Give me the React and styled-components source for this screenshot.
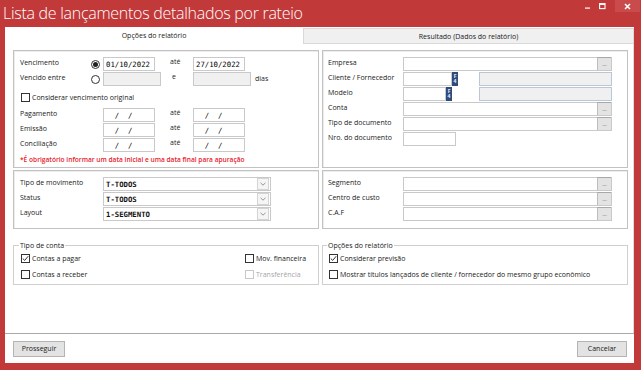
import styled, { createGlobalStyle } from "styled-components";

const GlobalStyle = createGlobalStyle`
  html, body {
    margin: 0;
    padding: 0;
    background: #c2393a;
  }
  * {
    box-sizing: border-box;
  }
`;

const UI = `"Open Sans", "Noto Sans", sans-serif`;
const MONO = `"DejaVu Sans Mono", "Liberation Mono", monospace`;

function Radio({ checked }) {
  return (
    <RadioBox>
      <RadioDot $checked={checked} />
    </RadioBox>
  );
}

function Check({ checked, disabled, children }) {
  return (
    <CheckRow $disabled={disabled}>
      <CheckBox $disabled={disabled}>
        {checked && (
          <svg width="7" height="7" viewBox="0 0 7 7">
            <path d="M0.8 3.6 L2.7 5.4 L6.2 1.2" fill="none" stroke="#333" strokeWidth="1" />
          </svg>
        )}
      </CheckBox>
      <span>{children}</span>
    </CheckRow>
  );
}

function LookupField({ w = 209 }) {
  return (
    <Field $w={w}>
      <FieldText />
      <EllipsisBtn>...</EllipsisBtn>
    </Field>
  );
}

function Select({ value }) {
  return (
    <SelectBox>
      <SelectText>{value}</SelectText>
      <SelectArrow>
        <svg width="6" height="4" viewBox="0 0 6 4">
          <path d="M0.5 0.8 L3 3.2 L5.5 0.8" fill="none" stroke="#8a8a8a" strokeWidth="0.9" />
        </svg>
      </SelectArrow>
    </SelectBox>
  );
}

function DateRow({ label }) {
  return (
    <Row>
      <Label $w={83}>{label}</Label>
      <Field $w={52}>
        <DateText>{"  /  /"}</DateText>
      </Field>
      <Joiner $w={38} $pl={15}>até</Joiner>
      <Field $w={52}>
        <DateText>{"  /  /"}</DateText>
      </Field>
    </Row>
  );
}

export default function App() {
  return (
    <>
      <GlobalStyle />
      <Window>
        <TitleBar>
          <Title>Lista de lançamentos detalhados por rateio</Title>
          <Controls>
            <CtrlBtn>
              <svg width="6" height="6" viewBox="0 0 6 6">
                <rect x="0" y="4.5" width="5" height="1.2" fill="#fff" />
              </svg>
            </CtrlBtn>
            <CtrlBtn>
              <svg width="7" height="7" viewBox="0 0 7 7">
                <rect x="0.6" y="0.6" width="5.4" height="5" fill="none" stroke="#fff" strokeWidth="1.1" />
                <rect x="0.6" y="0.6" width="5.4" height="1.4" fill="#fff" />
              </svg>
            </CtrlBtn>
            <CtrlBtn $close>
              <svg width="7" height="7" viewBox="0 0 7 7">
                <path d="M1 1 L6 6 M6 1 L1 6" stroke="#fff" strokeWidth="1.5" />
              </svg>
            </CtrlBtn>
          </Controls>
        </TitleBar>

        <Frame>
          <TabStrip>
            <Tab $active $w={298}>Opções do relatório</Tab>
            <Tab $w={331}>Resultado (Dados do relatório)</Tab>
          </TabStrip>

          <TabPage>
            <Columns>
              <Panel $h={118}>
                <Row>
                  <Label $w={70}>Vencimento</Label>
                  <Radio checked />
                  <Field $w={52}>
                    <DateText>01/10/2022</DateText>
                  </Field>
                  <Joiner $w={38} $pl={15}>até</Joiner>
                  <Field $w={52}>
                    <DateText>27/10/2022</DateText>
                  </Field>
                </Row>
                <Row>
                  <Label $w={70}>Vencido entre</Label>
                  <Radio />
                  <Field $w={58} $disabled />
                  <Joiner $w={32} $pl={11}>e</Joiner>
                  <Field $w={58} $disabled />
                  <Joiner $w={30} $pl={4} $mid>dias</Joiner>
                </Row>
                <CheckLine>
                  <Check>Considerar vencimento original</Check>
                </CheckLine>
                <DateRow label="Pagamento" />
                <DateRow label="Emissão" />
                <DateRow label="Conciliação" />
                <Note>*É obrigatório informar um data inicial e uma data final para apuração</Note>
              </Panel>

              <Panel $h={118} $right>
                <Row>
                  <Label $w={75}>Empresa</Label>
                  <LookupField />
                </Row>
                <Row>
                  <Label $w={75}>Cliente / Fornecedor</Label>
                  <Field $w={49} />
                  <F4Badge>
                    <span>F</span>
                    <span>4</span>
                  </F4Badge>
                  <Field $w={133} $disabled $blue $ml={21} />
                </Row>
                <Row>
                  <Label $w={75}>Modelo</Label>
                  <Field $w={43} />
                  <F4Badge>
                    <span>F</span>
                    <span>4</span>
                  </F4Badge>
                  <Field $w={133} $disabled $blue $ml={27} />
                </Row>
                <Row>
                  <Label $w={75}>Conta</Label>
                  <LookupField />
                </Row>
                <Row>
                  <Label $w={75}>Tipo de documento</Label>
                  <LookupField />
                </Row>
                <Row>
                  <Label $w={75}>Nro. do documento</Label>
                  <Field $w={53} />
                </Row>
              </Panel>

              <Panel $h={59}>
                <Row>
                  <Label $w={83}>Tipo de movimento</Label>
                  <Select value="T-TODOS" />
                </Row>
                <Row>
                  <Label $w={83}>Status</Label>
                  <Select value="T-TODOS" />
                </Row>
                <Row>
                  <Label $w={83}>Layout</Label>
                  <Select value="1-SEGMENTO" />
                </Row>
              </Panel>

              <Panel $h={59} $right>
                <Row>
                  <Label $w={75}>Segmento</Label>
                  <LookupField />
                </Row>
                <Row>
                  <Label $w={75}>Centro de custo</Label>
                  <LookupField />
                </Row>
                <Row>
                  <Label $w={75}>C.A.F</Label>
                  <LookupField />
                </Row>
              </Panel>

              <GroupBox>
                <Legend>Tipo de conta</Legend>
                <GroupGrid>
                  <Check checked>Contas a pagar</Check>
                  <Check>Mov. financeira</Check>
                  <Check>Contas a receber</Check>
                  <Check disabled>Transferência</Check>
                </GroupGrid>
              </GroupBox>

              <GroupBox $right>
                <Legend>Opções do relatório</Legend>
                <GroupList>
                  <Check checked>Considerar previsão</Check>
                  <Check>Mostrar títulos lançados de cliente / fornecedor do mesmo grupo econômico</Check>
                </GroupList>
              </GroupBox>
            </Columns>
          </TabPage>

          <Footer>
            <Button $w={52}>Prosseguir</Button>
            <Button $w={50}>Cancelar</Button>
          </Footer>
        </Frame>
      </Window>
    </>
  );
}

const Window = styled.div`
  width: 641px;
  height: 370px;
  background: #c2393a;
  display: flex;
  flex-direction: column;
  font-family: ${UI};
  color: #1a1a1a;
  overflow: hidden;
`;

const TitleBar = styled.div`
  height: 27px;
  display: flex;
  align-items: flex-start;
  justify-content: space-between;
`;

const Title = styled.div`
  padding: 2px 0 0 3px;
  font: 300 16px ${UI};
  letter-spacing: -0.28px;
  color: #ffffff;
  line-height: 22px;
`;

const Controls = styled.div`
  display: flex;
  align-items: flex-start;
  padding-right: 1px;
`;

const CtrlBtn = styled.div`
  width: ${(p) => (p.$close ? 25 : 15)}px;
  height: 12px;
  display: flex;
  align-items: center;
  justify-content: center;
  background: ${(p) => (p.$close ? "#c94b4b" : "transparent")};
  margin-left: ${(p) => (p.$close ? 5 : 0)}px;
`;

const Frame = styled.div`
  flex: 1;
  margin: 0 7px 7px 5px;
  background: #ffffff;
  display: flex;
  flex-direction: column;
`;

const TabStrip = styled.div`
  height: 17px;
  display: flex;
  align-items: flex-end;
`;

const Tab = styled.div`
  width: ${(p) => p.$w}px;
  height: ${(p) => (p.$active ? 17 : 16)}px;
  display: flex;
  align-items: center;
  justify-content: center;
  font-size: 7px;
  background: ${(p) => (p.$active ? "#ffffff" : "#f0f0f0")};
  border: ${(p) => (p.$active ? "none" : "1px solid #d9d9d9")};
`;

const TabPage = styled.div`
  height: 289px;
  padding: 6px 6px 0 8px;
  border-right: 1px solid #dcdcdc;
`;

const Columns = styled.div`
  display: grid;
  grid-template-columns: 306px 306px;
  column-gap: 3px;
  row-gap: 2px;
  align-items: start;
`;

const Panel = styled.div`
  height: ${(p) => p.$h}px;
  border: 1px solid #c2c2c2;
  box-shadow: inset 1px 1px 0 #ececec;
  padding: 6px 0 0 ${(p) => (p.$right ? 5 : 6)}px;
  display: flex;
  flex-direction: column;
  gap: 1px;
`;

const Row = styled.div`
  display: flex;
  align-items: flex-start;
  height: 14px;
`;

const Label = styled.div`
  width: ${(p) => p.$w}px;
  flex-shrink: 0;
  font-size: 7px;
  line-height: 11px;
  white-space: nowrap;
`;

const RadioBox = styled.div`
  width: 13px;
  height: 14px;
  display: flex;
  align-items: center;
  padding-left: 1px;
`;

const RadioDot = styled.div`
  width: 9px;
  height: 9px;
  border-radius: 50%;
  border: 1px solid #333;
  background: #fff;
  display: flex;
  align-items: center;
  justify-content: center;
  &::after {
    content: "";
    width: 5px;
    height: 5px;
    border-radius: 50%;
    background: ${(p) => (p.$checked ? "#222" : "transparent")};
  }
`;

const Field = styled.div`
  width: ${(p) => p.$w}px;
  height: 14px;
  flex-shrink: 0;
  margin-left: ${(p) => p.$ml || 0}px;
  border: 1px solid ${(p) => (p.$blue ? "#b9c7d8" : "#c9c9c9")};
  background: ${(p) => (p.$disabled ? "#f0f0f0" : "#ffffff")};
  display: flex;
  align-items: center;
`;

const FieldText = styled.div`
  flex: 1;
`;

const DateText = styled.span`
  padding-left: 2px;
  font: 400 7.3px ${MONO};
  white-space: pre;
  color: #000;
`;

const EllipsisBtn = styled.div`
  width: 14px;
  height: 13px;
  margin-top: -1px;
  border-left: 1px solid #bdbdbd;
  border-top: 1px solid #a8a8a8;
  background: #e3e3e3;
  font-size: 6px;
  line-height: 12px;
  text-align: center;
  color: #555;
`;

const F4Badge = styled.div`
  width: 6px;
  height: 14px;
  background: #2f4c7d;
  color: #e8eef8;
  font: 700 5px ${UI};
  line-height: 5px;
  display: flex;
  flex-direction: column;
  align-items: center;
  justify-content: center;
`;

const Joiner = styled.div`
  width: ${(p) => p.$w}px;
  flex-shrink: 0;
  padding-left: ${(p) => p.$pl}px;
  font-size: 7px;
  line-height: ${(p) => (p.$mid ? 14 : 10)}px;
`;

const CheckLine = styled.div`
  height: 20px;
  display: flex;
  align-items: center;
  padding-left: 1px;
`;

const CheckRow = styled.div`
  display: flex;
  align-items: center;
  gap: 2px;
  height: 13px;
  font-size: 7px;
  white-space: nowrap;
  color: ${(p) => (p.$disabled ? "#a6a6a6" : "#1a1a1a")};
`;

const CheckBox = styled.div`
  width: 9px;
  height: 9px;
  border: 1px solid ${(p) => (p.$disabled ? "#c8c8c8" : "#333")};
  background: #fff;
  display: flex;
  align-items: center;
  justify-content: center;
`;

const Note = styled.div`
  margin-top: 1px;
  font: 600 6.6px ${UI};
  color: #e8202a;
  line-height: 11px;
  white-space: nowrap;
`;

const SelectBox = styled.div`
  width: 168px;
  height: 14px;
  border: 1px solid #c9c9c9;
  display: flex;
  align-items: center;
`;

const SelectText = styled.div`
  flex: 1;
  padding-left: 2px;
  font: 700 7.3px ${MONO};
  color: #111;
`;

const SelectArrow = styled.div`
  width: 12px;
  height: 12px;
  margin-right: 1px;
  border: 1px solid #d4d4d4;
  background: #f5f5f5;
  display: flex;
  align-items: center;
  justify-content: center;
`;

const GroupBox = styled.fieldset`
  margin: 9px 0 0;
  padding: 0 0 1px ${(p) => (p.$right ? 6 : 7)}px;
  min-inline-size: 0;
  border: 1px solid #cfcfcf;
  height: 45px;
`;

const Legend = styled.legend`
  padding: 0 1px;
  margin-left: -2px;
  font-size: 7px;
  line-height: 11px;
`;

const GroupGrid = styled.div`
  display: grid;
  grid-template-columns: 224px auto;
  row-gap: 3px;
  padding-top: 1px;
`;

const GroupList = styled.div`
  display: flex;
  flex-direction: column;
  gap: 3px;
  padding-top: 1px;
`;

const Footer = styled.div`
  flex: 1;
  border-top: 1px solid #a9a9a9;
  display: flex;
  align-items: center;
  justify-content: space-between;
  padding: 0 7px 0 8px;
`;

const Button = styled.div`
  width: ${(p) => p.$w}px;
  height: 16px;
  border: 1px solid #b4b4b4;
  background: #e3e3e3;
  font-size: 7px;
  display: flex;
  align-items: center;
  justify-content: center;
`;
